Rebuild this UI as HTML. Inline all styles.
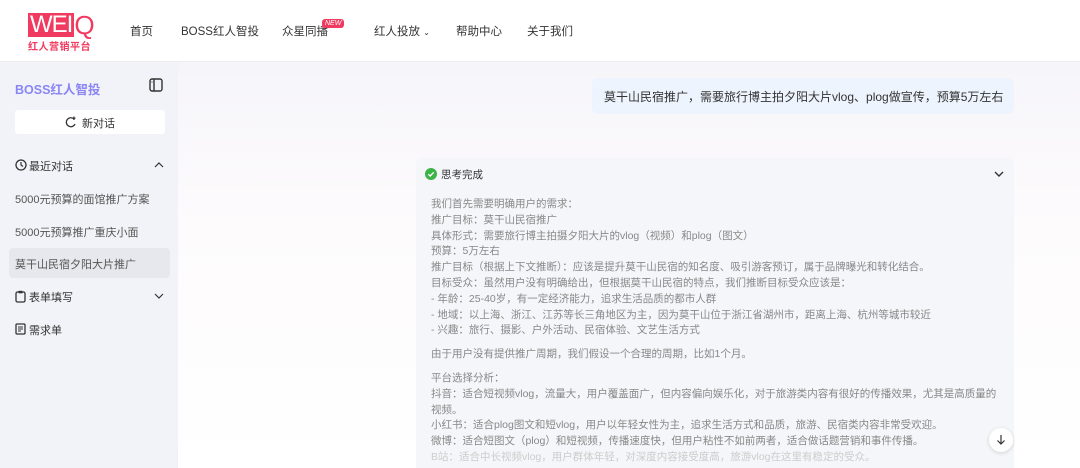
<!DOCTYPE html>
<html><head><meta charset="utf-8"><style>
*{margin:0;padding:0;box-sizing:border-box}
html,body{width:1080px;height:468px;overflow:hidden}
body{font-family:"Liberation Sans","Noto Sans CJK SC",sans-serif;background:#fff;position:relative;color:#333}
.hdr{position:absolute;left:0;top:0;width:1080px;height:62px;background:#fff;border-bottom:1px solid #eee}
.logo{position:absolute;left:28px;top:13px}
.logo .w{display:inline-block;background:#f03a5f;color:#fff;font-size:24px;line-height:24px;height:24px;padding:0 2px;letter-spacing:-1px}
.logo .q{color:#f03a5f;font-size:26px;line-height:24px;vertical-align:top}
.logo .s{color:#f03a5f;font-size:10px;font-weight:bold;margin-top:1px;letter-spacing:0.5px}
.nav{position:absolute;top:23px;font-size:11.5px;color:#333}
.new{position:absolute;left:322px;top:19px;background:#f03a5f;color:#fff;font-size:7px;padding:1px 3px;border-radius:3px;font-style:italic}
.side{position:absolute;left:0;top:62px;width:178px;height:406px;background:#f1f3f8}
.main{position:absolute;left:178px;top:62px;width:902px;height:406px;background:linear-gradient(180deg,#f6f5f9 0%,#fdfbfc 40%,#fff 100%)}
.t{position:absolute;font-size:11px;color:#333;white-space:nowrap}
.user{position:absolute;left:592px;top:78px;width:422px;height:36px;background:#eef4fd;border-radius:6px;font-size:12px;color:#333;padding:10px 12px;white-space:nowrap}
.card{position:absolute;left:416px;top:158px;width:598px;height:310px;background:#f5f6f9;border-radius:6px 6px 0 0}
.body{position:absolute;left:431px;top:197px;font-size:10.5px;line-height:15.8px;color:#888;white-space:nowrap}
.body p{margin:0}
</style></head><body>
<div class="hdr">
 <div class="logo"><span class="w">WEI</span><span class="q">Q</span><div class="s">红人营销平台</div></div>
 <div class="nav" style="left:130px">首页</div>
 <div class="nav" style="left:181px">BOSS红人智投</div>
 <div class="nav" style="left:282px">众星同播</div>
 <div class="new">NEW</div>
 <div class="nav" style="left:374px">红人投放 <span style="font-size:8px">⌄</span></div>
 <div class="nav" style="left:456px">帮助中心</div>
 <div class="nav" style="left:527px">关于我们</div>
</div>
<div class="side">
 <div class="t" style="left:15px;top:17px;font-size:12.5px;font-weight:bold;color:#8a86f5">BOSS红人智投</div>
 <svg style="position:absolute;left:149px;top:16px" width="14" height="14" viewBox="0 0 14 14"><rect x="1" y="1" width="12" height="12" rx="2" fill="none" stroke="#333" stroke-width="1.4"/><line x1="5" y1="1" x2="5" y2="13" stroke="#333" stroke-width="1.4"/><line x1="2.5" y1="4" x2="3.5" y2="4" stroke="#333"/></svg>
 <div style="position:absolute;left:15px;top:48px;width:150px;height:24px;background:#fff;border-radius:3px"></div>
 <svg style="position:absolute;left:65px;top:54px" width="12" height="12" viewBox="0 0 12 12"><path d="M9 3 A4.5 4.5 0 1 0 10 8" stroke="#333" stroke-width="1.3" fill="none"/><path d="M9 0.5 V4 M7.5 2.2 H10.5" stroke="#333" stroke-width="1.2"/></svg>
 <div class="t" style="left:82px;top:53px">新对话</div>
 <svg style="position:absolute;left:15px;top:97px" width="12" height="12" viewBox="0 0 12 12"><circle cx="6" cy="6" r="5" stroke="#333" stroke-width="1.3" fill="none"/><path d="M6 3 V6 L8 7.5" stroke="#333" stroke-width="1.2" fill="none"/></svg>
 <div class="t" style="left:29px;top:96px">最近对话</div>
 <svg style="position:absolute;left:154px;top:99px" width="10" height="8" viewBox="0 0 10 8"><path d="M1 6 L5 2 L9 6" stroke="#333" stroke-width="1.2" fill="none"/></svg>
 <div class="t" style="left:15px;top:129px;color:#555">5000元预算的面馆推广方案</div>
 <div class="t" style="left:15px;top:162px;color:#555">5000元预算推广重庆小面</div>
 <div style="position:absolute;left:9px;top:186px;width:161px;height:30px;background:#e7e8ed;border-radius:4px"></div>
 <div class="t" style="left:15px;top:194px;color:#555">莫干山民宿夕阳大片推广</div>
 <svg style="position:absolute;left:15px;top:228px" width="11" height="13" viewBox="0 0 11 13"><rect x="1" y="2" width="9" height="10" rx="1.5" stroke="#333" stroke-width="1.3" fill="none"/><rect x="3.5" y="0.8" width="4" height="2.5" fill="#333"/></svg>
 <div class="t" style="left:29px;top:227px">表单填写</div>
 <svg style="position:absolute;left:154px;top:230px" width="10" height="8" viewBox="0 0 10 8"><path d="M1 2 L5 6 L9 2" stroke="#333" stroke-width="1.2" fill="none"/></svg>
 <svg style="position:absolute;left:15px;top:261px" width="11" height="12" viewBox="0 0 11 12"><rect x="1" y="1" width="9" height="10" rx="1" stroke="#333" stroke-width="1.3" fill="none"/><path d="M3 4 H8 M3 6 H8 M3 8 H6" stroke="#333"/></svg>
 <div class="t" style="left:29px;top:260px">需求单</div>
</div>
<div class="main"></div>
<div class="user">莫干山民宿推广，需要旅行博主拍夕阳大片vlog、plog做宣传，预算5万左右</div>
<div class="card"></div>
<svg style="position:absolute;left:425px;top:168px" width="12" height="12" viewBox="0 0 12 12"><circle cx="6" cy="6" r="6" fill="#3bb346"/><path d="M3.3 6.2 L5.2 8 L8.7 4.3" stroke="#fff" stroke-width="1.4" fill="none"/></svg>
<div class="t" style="left:441px;top:167px;font-size:10.5px">思考完成</div>
<svg style="position:absolute;left:993px;top:169px" width="12" height="10" viewBox="0 0 12 10"><path d="M2 3 L6 7 L10 3" stroke="#333" stroke-width="1.4" fill="none"/></svg>
<div class="body">
<p>我们首先需要明确用户的需求：</p>
<p>推广目标：莫干山民宿推广</p>
<p>具体形式：需要旅行博主拍摄夕阳大片的vlog（视频）和plog（图文）</p>
<p>预算：5万左右</p>
<p>推广目标（根据上下文推断）：应该是提升莫干山民宿的知名度、吸引游客预订，属于品牌曝光和转化结合。</p>
<p>目标受众：虽然用户没有明确给出，但根据莫干山民宿的特点，我们推断目标受众应该是：</p>
<p>- 年龄：25-40岁，有一定经济能力，追求生活品质的都市人群</p>
<p>- 地域：以上海、浙江、江苏等长三角地区为主，因为莫干山位于浙江省湖州市，距离上海、杭州等城市较近</p>
<p>- 兴趣：旅行、摄影、户外活动、民宿体验、文艺生活方式</p>
<p style="margin-top:8px">由于用户没有提供推广周期，我们假设一个合理的周期，比如1个月。</p>
<p style="margin-top:8px">平台选择分析：</p>
<p>抖音：适合短视频vlog，流量大，用户覆盖面广，但内容偏向娱乐化，对于旅游类内容有很好的传播效果，尤其是高质量的</p>
<p>视频。</p>
<p>小红书：适合plog图文和短vlog，用户以年轻女性为主，追求生活方式和品质，旅游、民宿类内容非常受欢迎。</p>
<p>微博：适合短图文（plog）和短视频，传播速度快，但用户粘性不如前两者，适合做话题营销和事件传播。</p>
<p style="color:#ccc">B站：适合中长视频vlog，用户群体年轻，对深度内容接受度高，旅游vlog在这里有稳定的受众。</p>
</div>
<div style="position:absolute;left:989px;top:428px;width:24px;height:24px;border-radius:50%;background:#fff;box-shadow:0 1px 4px rgba(0,0,0,.15)"></div>
<svg style="position:absolute;left:995px;top:434px" width="12" height="12" viewBox="0 0 12 12"><path d="M6 1 V10 M2.5 6.5 L6 10 L9.5 6.5" stroke="#333" stroke-width="1.2" fill="none"/></svg>
</body></html>
